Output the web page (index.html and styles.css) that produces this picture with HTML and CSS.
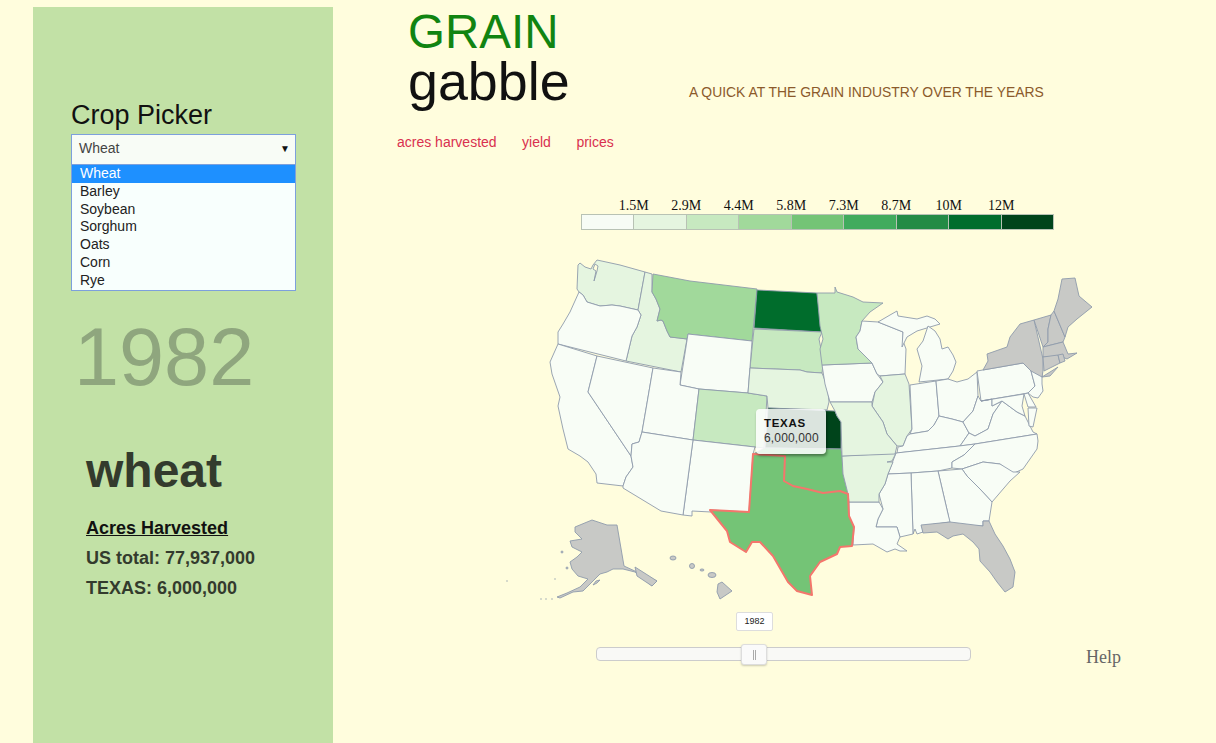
FILE: index.html
```html
<!DOCTYPE html>
<html lang="en">
<head>
<meta charset="utf-8">
<title>Grain Gabble</title>
<link rel="stylesheet" href="styles.css">
</head>
<body>
<aside class="sidebar">
  <h2 class="picker-title">Crop Picker</h2>
  <div class="select">
    <span>Wheat</span><span class="caret">▼</span>
  </div>
  <ul class="options">
    <li class="selected">Wheat</li>
    <li>Barley</li>
    <li>Soybean</li>
    <li>Sorghum</li>
    <li>Oats</li>
    <li>Corn</li>
    <li>Rye</li>
  </ul>
  <div class="year">1982</div>
  <section class="stats">
    <h1 class="crop">wheat</h1>
    <h3 class="stat-title">Acres Harvested</h3>
    <p class="stat">US total: 77,937,000</p>
    <p class="stat">TEXAS: 6,000,000</p>
  </section>
</aside>
<main class="main">
  <header class="header">
    <div class="logo">
      <div class="logo-top">GRAIN</div>
      <div class="logo-bottom">gabble</div>
    </div>
    <p class="tagline">A QUICK AT THE GRAIN INDUSTRY OVER THE YEARS</p>
  </header>
  <nav class="nav">
    <a>acres harvested</a>
    <a>yield</a>
    <a>prices</a>
  </nav>
  <div class="legend">
    <div class="legend-labels">
      <span>1.5M</span><span>2.9M</span><span>4.4M</span><span>5.8M</span><span>7.3M</span><span>8.7M</span><span>10M</span><span>12M</span>
    </div>
    <div class="legend-bar">
      <i class="s0"></i><i class="s1"></i><i class="s2"></i><i class="s3"></i><i class="s4"></i><i class="s5"></i><i class="s6"></i><i class="s7"></i><i class="s8"></i>
    </div>
  </div>
  <div class="map-wrap">
    <svg class="map" viewBox="500 250 600 360" width="600" height="360">
      <g class="states">
        <path class="f1" d="M578 266L580 264 585 268 591 270 593 266 597 261 620 266 645 273 638 311 620 307 612 306 600 307 587 303 583 296 579 293 577 290Z"/>
        <path class="water" d="M595 265L593 270 596 272 594 282 597 272 598 267Z"/>
        <path class="f1" d="M645 273L652 275 652 293 656 300 660 310 657 322 661 321 663 322 667 332 670 338 680 339 687 340 681 373 626 362 632 337 637 328 641 316 638 311Z"/>
        <path class="f3" d="M653 275L690 282 757 290 752 342 688 335 687 340 670 338 667 332 663 322 661 321 657 322 660 310 656 300 652 293Z"/>
        <path class="f7" d="M757 291L817 294 819 310 822 333 754 329Z"/>
        <path class="f2" d="M754 330L822 333 819 340 821 350 823 365 822 374 807 373 800 371 750 369Z"/>
        <path class="f0" d="M688 335L752 342 748 394 699 390 680 386Z"/>
        <path class="f0" d="M579 293L583 296 587 303 600 307 612 306 620 307 638 311 641 316 637 328 632 337 626 362 558 345 558 333 563 325 570 313Z"/>
        <path class="f0" d="M558 345L597 357 588 393 631 457 633 468 626 478 623 487 597 484 596 475 588 463 580 457 568 450 563 430 558 407 560 398 552 375 550 363Z"/>
        <path class="f0" d="M597 357L653 369 646 410 642 433 639 443 632 445 631 457 588 393Z"/>
        <path class="f0" d="M653 369L681 373 680 386 699 390 693 441 642 433 646 410Z"/>
        <path class="f2" d="M699 390L748 394 767 397 764 449 755 448 693 441Z"/>
        <path class="f0" d="M693 441L755 448 753 455 749 513 710 511 711 513 692 512 692 517 683 516Z"/>
        <path class="f0" d="M642 433L693 441 683 516 661 512 623 489 623 487 626 478 633 468 631 457 632 445 639 443Z"/>
        <path class="f1" d="M750 369L800 371 807 373 822 374 826 384 828 393 829 403 827 411 768 409 767 397 748 394Z"/>
        <path class="f8" d="M768 409L835 412 837 417 841 423 841 450 765 449Z"/>
        <path class="f4" d="M765 449L841 450 842 457 843 475 848 495 840 492 823 494 807 490 793 487 784 482 785 457 753 455Z"/>
        <path class="f0" d="M822 366L872 364 877 375 883 383 875 393 872 403 830 403 825 385Z"/>
        <path class="f2" d="M817 294L835 294 835 288 837 293 853 298 863 303 883 304 870 313 862 322 860 332 856 338 858 350 872 364 822 366 820 350 823 340 820 327Z"/>
        <path class="f0" d="M862 322L878 323 903 333 903 342 906 350 905 375 880 377 877 375 872 364 858 350 856 338 860 332Z"/>
        <path class="f0" d="M878 323L890 316 897 312 898 317 917 320 927 317 935 320 940 325 930 328 917 332 907 338 902 348 903 333Z"/>
        <path class="f0" d="M928 327L935 332 940 340 942 350 948 348 953 356 956 363 953 372 948 380 919 383 922 367 917 350 923 342Z"/>
        <path class="f1" d="M880 377L905 375 909 385 912 430 907 437 903 447 897 447 887 435 883 423 872 407 875 393 883 383Z"/>
        <path class="f0" d="M910 386L936 382 939 417 934 426 928 432 910 435 912 430Z"/>
        <path class="f0" d="M936 382L948 380 957 383 968 380 977 373 978 397 973 412 963 423 952 420 939 417Z"/>
        <path class="f0" d="M939 417L952 420 963 423 969 434 960 447 955 447.500 897 454 898 448 903 447 907 437 910 435 928 432 934 426Z"/>
        <path class="f0" d="M963 423L973 412 978 397 981 402 992 400 992 407 1002 402 993 415 988 430 975 437 969 434Z"/>
        <path class="f0" d="M960 447L969 434 975 437 988 430 993 415 1002 402 1017 413 1025 417 1033 433 1037 435 975 445Z"/>
        <path class="f0" d="M977 372L1023 364 1031 372 1035 387 1028 394 981 402Z"/>
        <path class="f0" d="M1031 372L1042 373 1042 385 1043 392 1038 399 1033 398 1028 394 1035 387Z"/>
        <path class="f0" d="M981 402L1024 395 1022 407 1025 417 1017 413 1002 402 992 407 992 400Z"/>
        <path class="f0" d="M1024 395L1028 394 1036 408 1028 408Z"/>
        <path class="f0" d="M1028 409L1037 409 1033 428 1029 427Z"/>
        <path class="f0" d="M888 475L896 454 955 447.500 975 445 964 456 952 463 952 469 938 472 911 474Z"/>
        <path class="f0" d="M975 445L1037 435 1038 442 1037 450 1023 470 1012 475 1000 465 983 463 962 470 952 469 952 463 964 456Z"/>
        <path class="f0" d="M962 470L983 463 1000 465 1013 473 1020 473 1010 482 992 503 980 490 967 477Z"/>
        <path class="f0" d="M938 472L962 470 967 477 980 490 992 503 989 522 983 522 983 527 950 526 948 515Z"/>
        <path class="f0" d="M911 474L938 472 948 515 950 523 922 527 923 533 917 535 915 530 913 535Z"/>
        <path class="f0" d="M888 475L911 474 913 535 900 538 897 528 876 528 878 520 883 510 879 495 885 485Z"/>
        <path class="f0" d="M849 503L879 503 883 510 878 520 876 528 897 528 900 538 897 545 907 552 900 552 895 550 887 553 873 545 853 546 854 528 849 517Z"/>
        <path class="f1" d="M842 457L896 454 892 462 887 463 893 463 888 475 885 485 879 495 879 503 849 503 848 495 843 475Z"/>
        <path class="f1" d="M830 403L872 403 872 407 883 423 887 435 897 447 895 455 842 457 841 423 837 417 835 412Z"/>
        <path class="grey" d="M983 371L988 362 987 355 1007 348 1010 338 1020 325 1034 321 1043 360 1043 372 1042 378 1058 368 1050 377 1042 378 1031 372 1023 364Z"/>
        <path class="grey" d="M1034 321L1051 316 1048 330 1048 343 1043 348Z"/>
        <path class="grey" d="M1051 316L1054 312 1065 338 1063 343 1043 348 1048 343 1048 330Z"/>
        <path class="grey" d="M1054 312L1058 300 1062 280 1075 279 1079 297 1092 308 1077 320 1068 328 1065 338Z"/>
        <path class="grey" d="M1043 348L1063 343 1068 355 1077 354 1067 360 1060 357 1043 358Z"/>
        <path class="grey" d="M1043 358L1058 356 1060 364 1044 372Z"/>
        <path class="grey" d="M1058 356L1063 355 1065 362 1060 364Z"/>
        <path class="grey" d="M921 526L950 523 983 527 983 522 989 522 995 535 1003 547 1010 560 1015 573 1013 588 1005 593 997 583 990 573 980 562 979 550 973 543 963 535 953 537 948 540 937 533 923 534Z"/>
        <path class="grey" d="M575 528L592 521 607 526 617 526 624 567 637 573 657 582 652 587 635 573 623 570 613 570 607 573 600 575 595 580 590 585 583 592 573 593 560 599 557 598 567 594 580 588 588 580 578 577 572 570 570 563 577 558 582 553 572 548 570 542 582 540 575 533Z"/>
        <path class="grey" d="M635 568L657 582 652 587 637 577Z"/>
        <path class="grey" d="M600 581L597 584 593 586 596 582Z"/>
        <circle class="grey" cx="562" cy="553" r="1"/>
        <circle class="grey" cx="567" cy="569" r="1"/>
        <circle class="dot" cx="555" cy="580" r="0.700"/>
        <circle class="dot" cx="552" cy="600" r="0.700"/>
        <circle class="dot" cx="546" cy="600" r="0.700"/>
        <circle class="dot" cx="541" cy="600" r="0.700"/>
        <circle class="dot" cx="507" cy="582" r="0.700"/>
        <path class="grey" d="M722 583L732 592 720 600 717 593 718 585Z"/>
        <ellipse class="grey" cx="673" cy="559" rx="3" ry="2"/>
        <ellipse class="grey" cx="692" cy="567" rx="2.500" ry="2.500"/>
        <ellipse class="grey" cx="702" cy="571" rx="2" ry="1"/>
        <ellipse class="grey" cx="712" cy="576" rx="4" ry="2.500"/>
        <path class="texas" d="M753 455L785 457 784 482 793 487 807 490 823 494 840 492 848 495 849 517 854 528 852 547 840 548 837 555 820 563 810 577 812 596 797 592 788 583 773 557 760 543 752 543 746 553 730 543 727 532 710 511 749 513Z"/>
      </g>
    </svg>
    <div class="tooltip">
      <strong>TEXAS</strong>
      <span>6,000,000</span>
    </div>
  </div>
  <div class="controls">
    <div class="slider-box">
      <div class="slider-value">1982</div>
      <div class="slider">
        <div class="handle"><i></i></div>
      </div>
    </div>
    <a class="help">Help</a>
  </div>
</main>
</body>
</html>
```
FILE: styles.css
```css
* { box-sizing: border-box; }
html, body { margin: 0; padding: 0; }
body {
  display: flex;
  height: 743px;
  overflow: hidden;
  background: #fffddd;
  font-family: "Liberation Sans", Arial, sans-serif;
}
.sidebar {
  width: 300px;
  margin: 7px 0 0 33px;
  padding: 92px 37px 0 38px;
  background: #c2e1a6;
  flex: none;
}
.picker-title {
  margin: 0 0 2px;
  font-size: 27px;
  font-weight: 400;
  line-height: 33px;
  color: #111;
}
.select {
  display: flex;
  justify-content: space-between;
  align-items: center;
  height: 31px;
  padding: 0 5px 3px 7px;
  border: 1px solid #7da0dc;
  background: #f8fcf6;
  font-size: 14px;
  color: #444;
}
.caret { font-size: 10px; color: #111; }
.options {
  list-style: none;
  margin: -1px 0 0;
  padding: 0;
  border: 1px solid #7da0dc;
  background: #f8fffd;
  font-size: 14px;
  color: #222;
}
.options li { height: 17.8px; line-height: 17.8px; padding-left: 8px; }
.options .selected { background: #1e90ff; color: #fff; }
.year {
  margin: 20px 0 0 3px;
  font-size: 81px;
  line-height: 92px;
  color: #8fa67e;
}
.stats { margin: 0 0 0 15px; color: #333b2d; }
.crop {
  margin: 41px 0 0;
  font-size: 48px;
  line-height: 54px;
  font-weight: 700;
}
.stat-title {
  margin: 15px 0 0;
  font-size: 18px;
  line-height: 30px;
  font-weight: 700;
  color: #111;
  text-decoration: underline;
}
.stat {
  margin: 0;
  font-size: 18px;
  line-height: 30px;
  font-weight: 700;
}
.main { flex: 1; min-width: 0; }
.header { display: flex; align-items: flex-end; padding: 6px 0 0 75px; }
.logo { width: 281px; }
.logo-top { padding-top: 2px; font-size: 47.5px; line-height: 48px; color: #118411; }
.logo-bottom { font-size: 53.8px; line-height: 50px; color: #111; }
.tagline {
  margin: 0 0 6px;
  font-size: 13.9px;
  line-height: 16px;
  color: #8b5a2b;
}
.nav {
  display: flex;
  gap: 25.5px;
  padding: 28px 0 0 64px;
  font-size: 14px;
  line-height: 16px;
  color: #d9304f;
}
.legend { margin: 48px 0 0 248px; width: 473px; font-family: "Liberation Serif", serif; }
.legend-labels {
  display: flex;
  padding-left: 26.5px;
  font-size: 14px;
  line-height: 16px;
  color: #111;
}
.legend-labels span { width: 52.5px; text-align: center; }
.legend-bar { display: flex; height: 16px; }
.legend-bar i { flex: 1; border: 1px solid #b8c2b4; border-width: 1px 1px 1px 0; }
.legend-bar i:first-child { border-left-width: 1px; }
.s0 { background: #f7fcf5; }
.s1 { background: #e5f5e0; }
.s2 { background: #c7e9c0; }
.s3 { background: #a1d99b; }
.s4 { background: #74c476; }
.s5 { background: #41ab5d; }
.s6 { background: #238b45; }
.s7 { background: #006d2c; }
.s8 { background: #00441b; }
.map-wrap { position: relative; margin: 19px 0 0 167px; width: 600px; height: 360px; }
.map { display: block; }
.states path, .states ellipse, .states circle { stroke: #8f9bab; stroke-width: 0.9; stroke-linejoin: round; }
.f0 { fill: #f8fdf6; }
.f1 { fill: #e5f5e0; }
.f2 { fill: #c7e9c0; }
.f3 { fill: #a1d99b; }
.f4 { fill: #74c476; }
.f7 { fill: #006d2c; }
.f8 { fill: #00441b; }
.grey { fill: #c8c9c6; }
.water { fill: #fffddd; }
.states .dot { fill: #8f9bab; stroke: none; }
.states .texas { fill: #74c476; stroke: #f4766c; stroke-width: 2; }
.tooltip {
  position: absolute;
  left: 256px;
  top: 160px;
  width: 70px;
  height: 45px;
  padding: 7px 0 0 8px;
  border-radius: 4px;
  background: rgba(255, 255, 255, 0.86);
  box-shadow: 1px 2px 3px rgba(0, 0, 0, 0.4);
  font-size: 12px;
  line-height: 15px;
  letter-spacing: 0.15px;
  color: #333;
}
.tooltip strong { display: block; color: #111; font-size: 11.5px; letter-spacing: 0.7px; }
.tooltip span { display: block; }
.controls { display: flex; align-items: flex-end; margin: 3px 0 0 263px; }
.slider-box { width: 375px; position: relative; }
.slider-value {
  width: 37px;
  height: 19px;
  margin-left: 140px;
  border: 1px solid #ddd;
  border-radius: 2px;
  background: #fff;
  font-size: 9px;
  line-height: 17px;
  text-align: center;
  color: #222;
}
.slider {
  position: relative;
  height: 14px;
  margin-top: 16px;
  border: 1px solid #ccc;
  border-radius: 4px;
  background: #f9f9f6;
}
.handle {
  position: absolute;
  left: 144px;
  top: -4px;
  width: 26px;
  height: 21px;
  display: flex;
  align-items: center;
  justify-content: center;
  border: 1px solid #ddd;
  border-radius: 3px;
  background: #fafafa;
  box-shadow: 0 1px 2px rgba(0, 0, 0, 0.2);
}
.handle i { width: 3px; height: 10px; border: 1px solid #aaa; border-width: 0 1px; }
.help {
  margin: 0 0 -6px 115px;
  font-family: "Liberation Serif", serif;
  font-size: 18px;
  line-height: 20px;
  color: #666;
}
```
